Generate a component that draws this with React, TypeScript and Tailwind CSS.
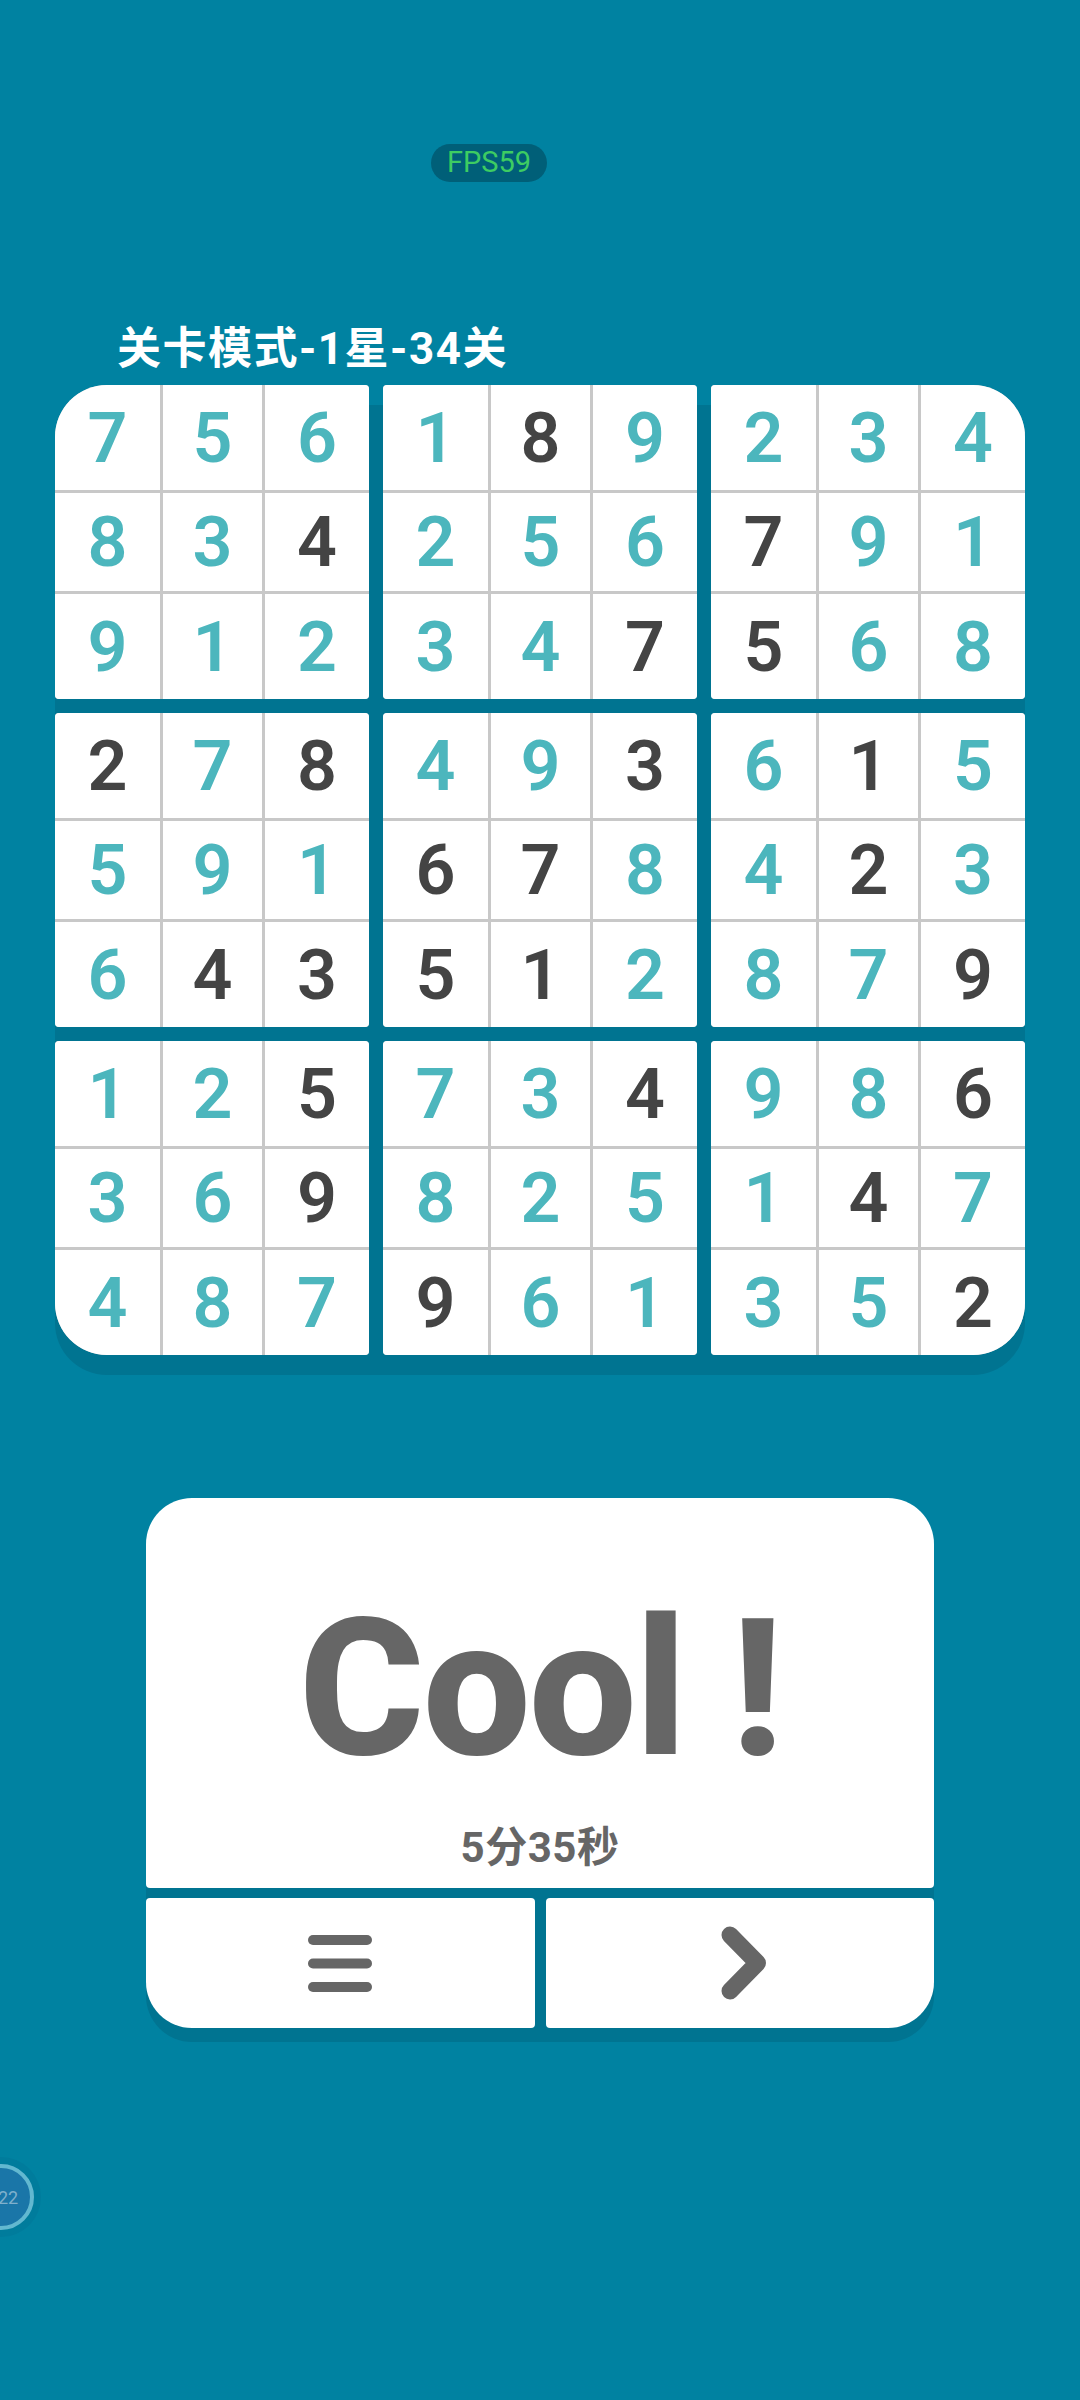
const rows = [
  "756189234",
  "834256791",
  "912347568",
  "278493615",
  "591678423",
  "643512879",
  "125734986",
  "369825147",
  "487961352",
];

// 1 = digit placed by the player (dark)
const darkMask = [
  "000010000",
  "001000100",
  "000001100",
  "101001010",
  "000110010",
  "011110001",
  "001001001",
  "001000010",
  "000100001",
];

const blockCorners = [
  "rounded-[4px] rounded-tl-[52px]",
  "rounded-[4px]",
  "rounded-[4px] rounded-tr-[52px]",
  "rounded-[4px]",
  "rounded-[4px]",
  "rounded-[4px]",
  "rounded-[4px] rounded-bl-[52px]",
  "rounded-[4px]",
  "rounded-[4px] rounded-br-[52px]",
];

function Block({ index }: { index: number }) {
  const startRow = Math.floor(index / 3) * 3;
  const startCol = (index % 3) * 3;
  const cells = [];
  for (let r = startRow; r < startRow + 3; r++) {
    for (let c = startCol; c < startCol + 3; c++) {
      cells.push({ value: rows[r][c], dark: darkMask[r][c] === "1" });
    }
  }

  return (
    <div
      className={`grid grid-cols-[105px_99px_104px] grid-rows-[105px_98px_105px] gap-[3px] overflow-hidden bg-[#c8c8c8] ${blockCorners[index]}`}
    >
      {cells.map((cell, idx) => (
        <div
          key={idx}
          className={`flex items-center justify-center bg-white font-['Roboto',sans-serif] text-[70px] leading-none font-semibold ${
            cell.dark ? "text-[#444444]" : "text-[#4cb6bd]"
          }`}
        >
          {cell.value}
        </div>
      ))}
    </div>
  );
}

function App() {
  return (
    <div className="relative flex h-[2400px] w-[1080px] flex-col overflow-hidden bg-[#0082a1]">
      {/* FPS counter */}
      <div className="mt-[144px] ml-[431px] flex h-[38px] w-[116px] items-center justify-center rounded-full bg-[#005f78] font-['Roboto',sans-serif] text-[29px] text-[#3dcc62]">
        FPS59
      </div>

      {/* Level title */}
      <div className="mt-[136px] ml-[117px] h-[67px] font-['Roboto','Noto_Sans_CJK_SC',sans-serif] text-[44px] leading-[63px] font-bold tracking-[1.5px] whitespace-nowrap text-white">
        关卡模式-1星-34关
      </div>

      {/* Board */}
      <div className="relative ml-[55px] w-[970px]">
        <div className="absolute inset-0 translate-y-[20px] rounded-[52px] bg-[#007491]"></div>
        <div className="relative grid grid-cols-3 gap-[14px]">
          {blockCorners.map((_, idx) => (
            <Block key={idx} index={idx} />
          ))}
        </div>
      </div>

      {/* Result card */}
      <div className="relative mt-[143px] ml-[146px] w-[788px]">
        <div className="absolute inset-0 translate-y-[14px] rounded-[46px] bg-[#007491]"></div>
        <div className="relative flex flex-col gap-[10px]">
          <div className="flex h-[390px] flex-col items-center rounded-[4px] rounded-t-[46px] bg-white text-[#666666]">
            <div className="mt-[96px] h-[190px] font-['Roboto',sans-serif] text-[192px] leading-[190px] font-extrabold tracking-[-2px] whitespace-nowrap">
              Cool !
            </div>
            <div className="mt-[39px] font-['Roboto','Noto_Sans_CJK_SC',sans-serif] text-[42px] leading-[50px] font-bold tracking-[0.5px]">
              5分35秒
            </div>
          </div>
          <div className="flex h-[130px] gap-[11px]">
            <div className="flex flex-1 items-center justify-center rounded-[4px] rounded-bl-[46px] bg-white">
              <svg width="64" height="57" viewBox="0 0 64 57">
                <rect x="0" y="0" width="64" height="10" rx="5" fill="#666666" />
                <rect x="0" y="23.5" width="64" height="10" rx="5" fill="#666666" />
                <rect x="0" y="47" width="64" height="10" rx="5" fill="#666666" />
              </svg>
            </div>
            <div className="flex flex-1 items-center justify-center rounded-[4px] rounded-br-[46px] bg-white">
              <svg className="ml-[8px]" width="46" height="74" viewBox="0 0 46 74">
                <path
                  d="M9 9 L36.5 37 L9 65"
                  fill="none"
                  stroke="#666666"
                  strokeWidth="17"
                  strokeLinecap="round"
                  strokeLinejoin="round"
                />
              </svg>
            </div>
          </div>
        </div>
      </div>

      {/* Floating timer bubble, half off screen */}
      <div className="absolute top-[2157px] left-[-39px] flex h-[80px] w-[80px] items-center justify-center rounded-full bg-[#007c9c]">
        <div className="flex h-[66px] w-[66px] items-center justify-center rounded-full border-[4px] border-[#62b8d0] bg-[#1a76a8] pl-[14px] font-['Roboto',sans-serif] text-[18px] text-[#7fb0cc]">
          22
        </div>
      </div>
    </div>
  );
}

export default App;
